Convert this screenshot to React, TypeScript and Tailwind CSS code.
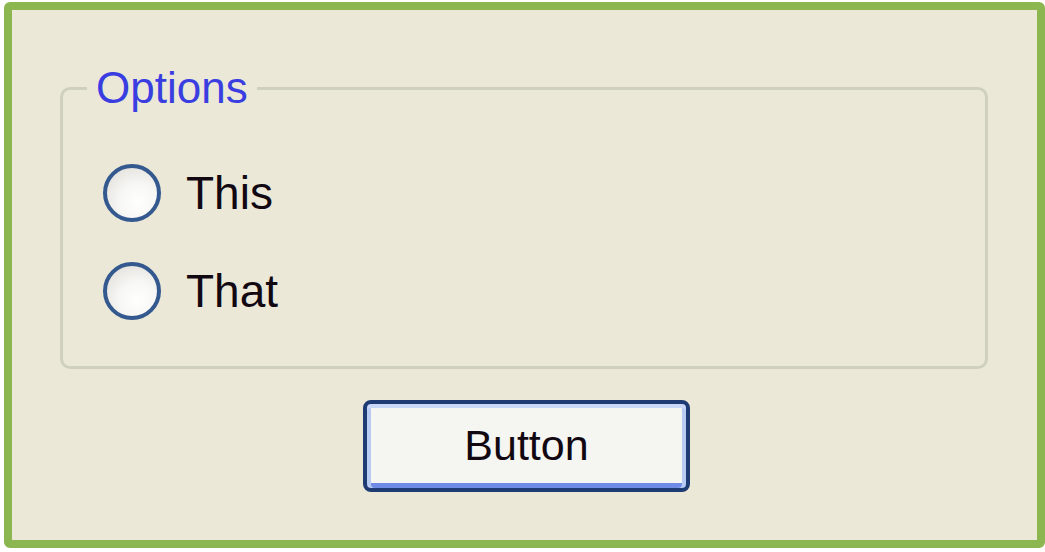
import React, { useState } from 'react';

const OPTIONS = ['This', 'That'];

function Radio({ label, checked, onSelect }: { label: string; checked: boolean; onSelect: () => void }) {
  return (
    <label onClick={onSelect} className="flex items-center h-[58px] cursor-default select-none">
      <span className="w-[58px] h-[58px] rounded-full border-[4px] border-[#33598f] bg-[radial-gradient(circle_at_62%_68%,#ffffff_0%,#f7f7f5_40%,#dcdad3_100%)] flex items-center justify-center shrink-0">
        {checked && <span className="w-[20px] h-[20px] rounded-full bg-[radial-gradient(circle_at_40%_35%,#8fe27a,#21a121)]" />}
      </span>
      <span className="ml-[25px] text-[46px] leading-[58px] text-[#120812]">{label}</span>
    </label>
  );
}

export default function App() {
  const [choice, setChoice] = useState<string | null>(null);

  return (
    <div className="w-[1045px] h-[552px] bg-white pt-[2px] pl-[4px] pb-[4px]" style={{ fontFamily: '"Liberation Sans", Arial, sans-serif' }}>
      <div className="h-full border-[8px] border-[#8bb650] rounded-[6px] bg-[#ebe8d8] pl-[48px] pr-[49px] flex flex-col">
        {/* Group box */}
        <fieldset className="mt-[56px] border-[3px] border-[#d0d0bf] rounded-[10px]">
          <legend className="ml-[24px] px-[9px] text-[44px] leading-[44px] text-[#3a3ee0]">Options</legend>
          <div className="pl-[40px] pt-[54px] pb-[46px] flex flex-col gap-[40px]">
            {OPTIONS.map(opt => (
              <Radio key={opt} label={opt} checked={choice === opt} onSelect={() => setChoice(opt)} />
            ))}
          </div>
        </fieldset>

        {/* Default push button */}
        <div className="mt-[31px] flex justify-center pl-[5px]">
          <button className="w-[327px] h-[92px] rounded-[8px] border-[4px] border-[#1f3b73] bg-[#f5f5f1] shadow-[inset_0_4px_0_#c9d8f7,inset_4px_0_0_#b7cbf3,inset_-4px_0_0_#b7cbf3,inset_0_-5px_0_#6f8be6] text-[43px] leading-none text-[#120812] pb-[2px]">
            Button
          </button>
        </div>
      </div>
    </div>
  );
}
